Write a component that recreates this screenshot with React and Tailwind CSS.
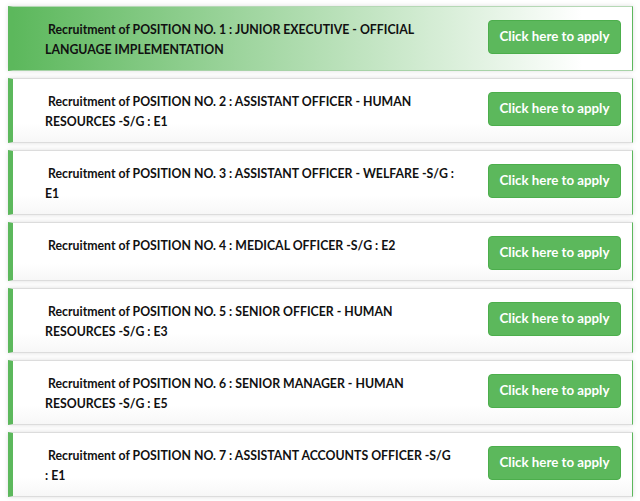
import React from 'react';

// word joiner keeps "-S/G" from breaking after the hyphen
const WJ = '\u2060';

const positions = [
    'Recruitment of POSITION NO. 1 : JUNIOR EXECUTIVE - OFFICIAL LANGUAGE IMPLEMENTATION',
    `Recruitment of POSITION NO. 2 : ASSISTANT OFFICER - HUMAN RESOURCES -${WJ}S/G : E1`,
    `Recruitment of POSITION NO. 3 : ASSISTANT OFFICER - WELFARE -${WJ}S/G : E1`,
    `Recruitment of POSITION NO. 4 : MEDICAL OFFICER -${WJ}S/G : E2`,
    `Recruitment of POSITION NO. 5 : SENIOR OFFICER - HUMAN RESOURCES -${WJ}S/G : E3`,
    `Recruitment of POSITION NO. 6 : SENIOR MANAGER - HUMAN RESOURCES -${WJ}S/G : E5`,
    `Recruitment of POSITION NO. 7 : ASSISTANT ACCOUNTS OFFICER -${WJ}S/G\n: E1`,
];

export default function App() {
    return (
        <div className="bg-white min-h-[501px] pt-[6px] pl-2 pr-[7px] flex flex-col gap-[7px] font-['Lato','Liberation_Sans',sans-serif]">
            {positions.map((title, i) => (
                <PositionCard key={title} title={title} active={i === 0} />
            ))}
        </div>
    );
}

function PositionCard({ title, active }) {
    return (
        <div
            className={
                'flex items-start pt-[13px] pb-[10px] pr-[11px] border border-[#dcdcdc] border-l-[5px] border-l-[#5cb85c] border-r-[#5cb85c] shadow-[0_0_5px_rgba(0,0,0,0.13)] ' +
                (active
                    ? 'bg-[linear-gradient(to_right,#5cb85c,#ffffff_92%)] border-t-[#b5d8b5] border-b-[#a8d3a8]'
                    : 'bg-[linear-gradient(to_bottom,#ffffff_70%,#f7f7f7)]')
            }
        >
            <p className="w-[413px] ml-8 text-[12.3px] leading-5 font-bold text-[#111] whitespace-pre-wrap">
                {' ' + title}
            </p>
            <button className="ml-auto h-[34px] w-[133px] rounded-[4px] bg-[#5cb85c] border border-[#4cae4c] text-white text-[13.3px] font-bold">
                Click here to apply
            </button>
        </div>
    );
}
